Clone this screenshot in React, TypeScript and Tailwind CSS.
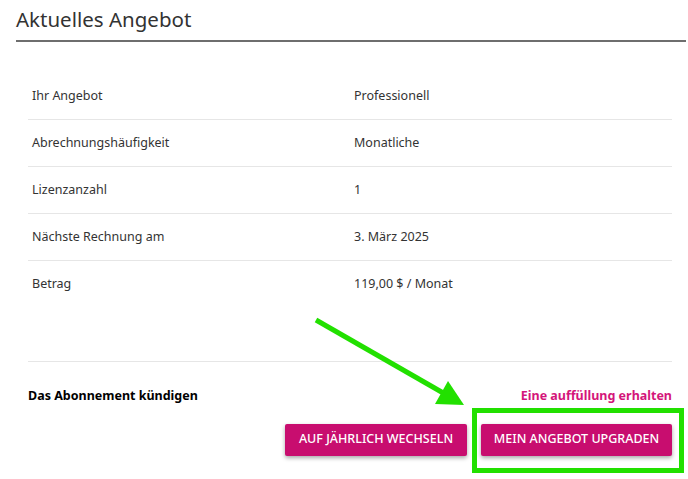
import React from "react";

const rows: [string, string][] = [
  ["Ihr Angebot", "Professionell"],
  ["Abrechnungshäufigkeit", "Monatliche"],
  ["Lizenzanzahl", "1"],
  ["Nächste Rechnung am", "3. März 2025"],
  ["Betrag", "119,00 $ / Monat"],
];

function App() {
  return (
    <div
      className="relative h-[479px] w-[688px] overflow-hidden bg-white text-[#333]"
      style={{ fontFamily: '"Noto Sans", "Open Sans", sans-serif' }}
    >
      <div className="pl-4 pr-[2px]">
        <h1 className="border-b-2 border-[#6e6e6e] pt-[4px] pb-[6px] text-[20.5px] leading-[30px] font-normal text-[#333]">
          Aktuelles Angebot
        </h1>
      </div>

      <div className="ml-[28px] mr-[16px] mt-[31px]">
        {rows.map(([label, value], i) => (
          <div
            key={label}
            className={
              "grid h-[47px] grid-cols-2 items-center text-[12.5px] " +
              (i < rows.length - 1 ? "border-b border-[#e6e6e6]" : "")
            }
          >
            <div className="px-1">{label}</div>
            <div className="px-1">{value}</div>
          </div>
        ))}
        <div className="mt-[53px] border-t border-[#e6e6e6]" />
        <div className="mt-[25px] flex items-center justify-between text-[12.5px] font-bold">
          <span className="text-black">Das Abonnement kündigen</span>
          <a className="text-[#d4157a]">Eine auffüllung erhalten</a>
        </div>
        <div className="mt-[18px] flex justify-end gap-[14px]">
          <button className="h-[32px] w-[182px] rounded-[2px] bg-[#c80d6f] text-[12.5px] font-medium text-white shadow-[0_2px_4px_rgba(0,0,0,0.35)]">
            AUF JÄHRLICH WECHSELN
          </button>
          <button className="h-[32px] w-[191px] rounded-[2px] bg-[#c80d6f] text-[12.5px] font-medium text-white shadow-[0_2px_4px_rgba(0,0,0,0.35)]">
            MEIN ANGEBOT UPGRADEN
          </button>
        </div>
      </div>

      {/* annotation overlay */}
      <div className="pointer-events-none absolute left-[472px] top-[408px] h-[65px] w-[212px] border-[5px] border-[#22e000]" />
      <svg
        className="pointer-events-none absolute left-0 top-0"
        width="688"
        height="479"
      >
        <line x1="316" y1="320" x2="445" y2="394" stroke="#22e000" strokeWidth="5" />
        <polygon points="464,405 435,404 448,381" fill="#22e000" />
      </svg>
    </div>
  );
}

export default App;
